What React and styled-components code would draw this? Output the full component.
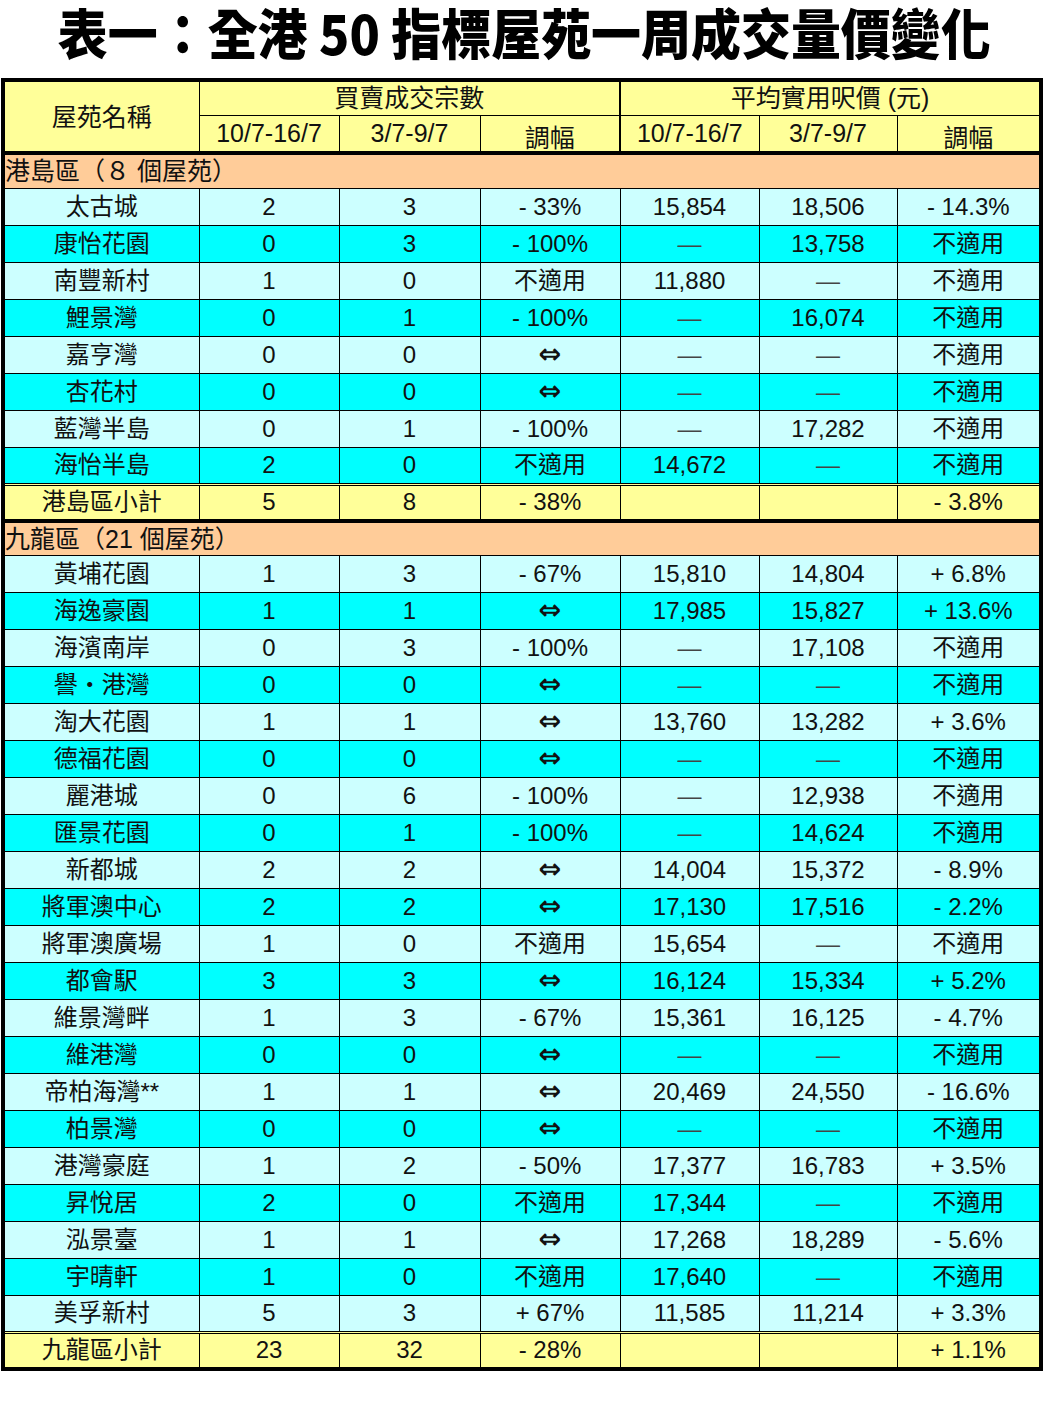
import React from "react";
import styled, { createGlobalStyle } from "styled-components";

const GlobalStyle = createGlobalStyle`
  body {
    margin: 0;
    background: #fff;
  }
`;

const Page = styled.div`
  width: 1048px;
`;

const Title = styled.h1`
  margin: 0;
  height: 78px;
  line-height: 63px;
  text-align: center;
  font-family: "Noto Sans CJK TC", sans-serif;
  font-weight: 900;
  font-size: 54px;
  color: #000;
  white-space: nowrap;
`;

const TitleText = styled.span`
  display: inline-block;
  transform: scaleX(0.925);
`;

const Table = styled.table`
  border-collapse: collapse;
  table-layout: fixed;
  width: 1038px;
  margin-left: 1px;
  border: 4px solid #000;
  font-family: "Liberation Sans", "Noto Sans CJK TC", sans-serif;
  color: #111;
`;

const Row = styled.tr`
  height: ${(p) => p.$h}px;
  background: ${(p) => p.$bg};
`;

const HeadCell = styled.td`
  border: 1px solid #000;
  border-left-width: ${(p) => (p.$thick ? 2 : 1)}px;
  border-bottom-width: ${(p) => (p.$last ? 4 : 1)}px;
  padding: 0;
  text-align: center;
  vertical-align: ${(p) => (p.$low ? "bottom" : "middle")};
  font-size: 25px;
  line-height: ${(p) => (p.$low ? 26 : 30)}px;
  white-space: nowrap;
`;

const RegionCell = styled.td`
  border: 1px solid #000;
  border-top-width: 4px;
  padding: 0;
  text-align: left;
  font-size: 25px;
  line-height: 30px;
  white-space: nowrap;
`;

const Cell = styled.td`
  border: 1px solid #000;
  border-top: ${(p) => (p.$total ? "3px double #000" : "1px solid #000")};
  border-bottom-width: ${(p) => (p.$total ? 4 : 1)}px;
  padding: 0;
  text-align: center;
  font-size: 24px;
  line-height: 30px;
  white-space: nowrap;
`;

const Dash = styled.span`
  color: #444;
`;

const Swap = styled.span`
  font-family: "DejaVu Sans", sans-serif;
  font-weight: bold;
  font-size: 27px;
  line-height: 30px;
`;

const COLORS = {
  head: "#ffff99",
  region: "#ffcc99",
  light: "#ccffff",
  cyan: "#00ffff",
  total: "#ffff99",
};

const WIDTHS = [196, 140, 141, 140, 139, 138, 144];

const hk = [
  ["太古城", "2", "3", "- 33%", "15,854", "18,506", "- 14.3%"],
  ["康怡花園", "0", "3", "- 100%", "—", "13,758", "不適用"],
  ["南豐新村", "1", "0", "不適用", "11,880", "—", "不適用"],
  ["鯉景灣", "0", "1", "- 100%", "—", "16,074", "不適用"],
  ["嘉亨灣", "0", "0", "⇔", "—", "—", "不適用"],
  ["杏花村", "0", "0", "⇔", "—", "—", "不適用"],
  ["藍灣半島", "0", "1", "- 100%", "—", "17,282", "不適用"],
  ["海怡半島", "2", "0", "不適用", "14,672", "—", "不適用"],
];

const kln = [
  ["黃埔花園", "1", "3", "- 67%", "15,810", "14,804", "+ 6.8%"],
  ["海逸豪園", "1", "1", "⇔", "17,985", "15,827", "+ 13.6%"],
  ["海濱南岸", "0", "3", "- 100%", "—", "17,108", "不適用"],
  ["譽・港灣", "0", "0", "⇔", "—", "—", "不適用"],
  ["淘大花園", "1", "1", "⇔", "13,760", "13,282", "+ 3.6%"],
  ["德福花園", "0", "0", "⇔", "—", "—", "不適用"],
  ["麗港城", "0", "6", "- 100%", "—", "12,938", "不適用"],
  ["匯景花園", "0", "1", "- 100%", "—", "14,624", "不適用"],
  ["新都城", "2", "2", "⇔", "14,004", "15,372", "- 8.9%"],
  ["將軍澳中心", "2", "2", "⇔", "17,130", "17,516", "- 2.2%"],
  ["將軍澳廣場", "1", "0", "不適用", "15,654", "—", "不適用"],
  ["都會駅", "3", "3", "⇔", "16,124", "15,334", "+ 5.2%"],
  ["維景灣畔", "1", "3", "- 67%", "15,361", "16,125", "- 4.7%"],
  ["維港灣", "0", "0", "⇔", "—", "—", "不適用"],
  ["帝柏海灣**", "1", "1", "⇔", "20,469", "24,550", "- 16.6%"],
  ["柏景灣", "0", "0", "⇔", "—", "—", "不適用"],
  ["港灣豪庭", "1", "2", "- 50%", "17,377", "16,783", "+ 3.5%"],
  ["昇悅居", "2", "0", "不適用", "17,344", "—", "不適用"],
  ["泓景臺", "1", "1", "⇔", "17,268", "18,289", "- 5.6%"],
  ["宇晴軒", "1", "0", "不適用", "17,640", "—", "不適用"],
  ["美孚新村", "5", "3", "+ 67%", "11,585", "11,214", "+ 3.3%"],
];

function Value({ v }) {
  if (v === "—") return <Dash>—</Dash>;
  if (v === "⇔") return <Swap>⇔</Swap>;
  return v;
}

function Section({ label, regionHeight, rows, total }) {
  return (
    <>
      <Row $h={regionHeight} $bg={COLORS.region}>
        <RegionCell colSpan={7}>{label}</RegionCell>
      </Row>
      {rows.map((r, i) => (
        <Row key={r[0]} $h={37} $bg={i % 2 ? COLORS.cyan : COLORS.light}>
          {r.map((v, j) => (
            <Cell key={j}>
              <Value v={v} />
            </Cell>
          ))}
        </Row>
      ))}
      <Row $h={37} $bg={COLORS.total}>
        {total.map((v, j) => (
          <Cell key={j} $total>
            {v}
          </Cell>
        ))}
      </Row>
    </>
  );
}

export default function App() {
  return (
    <Page>
      <GlobalStyle />
      <Title>
        <TitleText>表一：全港 50 指標屋苑一周成交量價變化</TitleText>
      </Title>
      <Table>
        <colgroup>
          {WIDTHS.map((w, i) => (
            <col key={i} style={{ width: w }} />
          ))}
        </colgroup>
        <tbody>
          <Row $h={35} $bg={COLORS.head}>
            <HeadCell rowSpan={2} $last>屋苑名稱</HeadCell>
            <HeadCell colSpan={3}>買賣成交宗數</HeadCell>
            <HeadCell colSpan={3} $thick>平均實用呎價 (元)</HeadCell>
          </Row>
          <Row $h={38} $bg={COLORS.head}>
            <HeadCell $last>10/7-16/7</HeadCell>
            <HeadCell $last>3/7-9/7</HeadCell>
            <HeadCell $last $low>調幅</HeadCell>
            <HeadCell $last $thick>10/7-16/7</HeadCell>
            <HeadCell $last>3/7-9/7</HeadCell>
            <HeadCell $last $low>調幅</HeadCell>
          </Row>
          <Section
            label="港島區（８ 個屋苑）"
            regionHeight={35}
            rows={hk}
            total={["港島區小計", "5", "8", "- 38%", "", "", "- 3.8%"]}
          />
          <Section
            label="九龍區（21 個屋苑）"
            regionHeight={34}
            rows={kln}
            total={["九龍區小計", "23", "32", "- 28%", "", "", "+ 1.1%"]}
          />
        </tbody>
      </Table>
    </Page>
  );
}
